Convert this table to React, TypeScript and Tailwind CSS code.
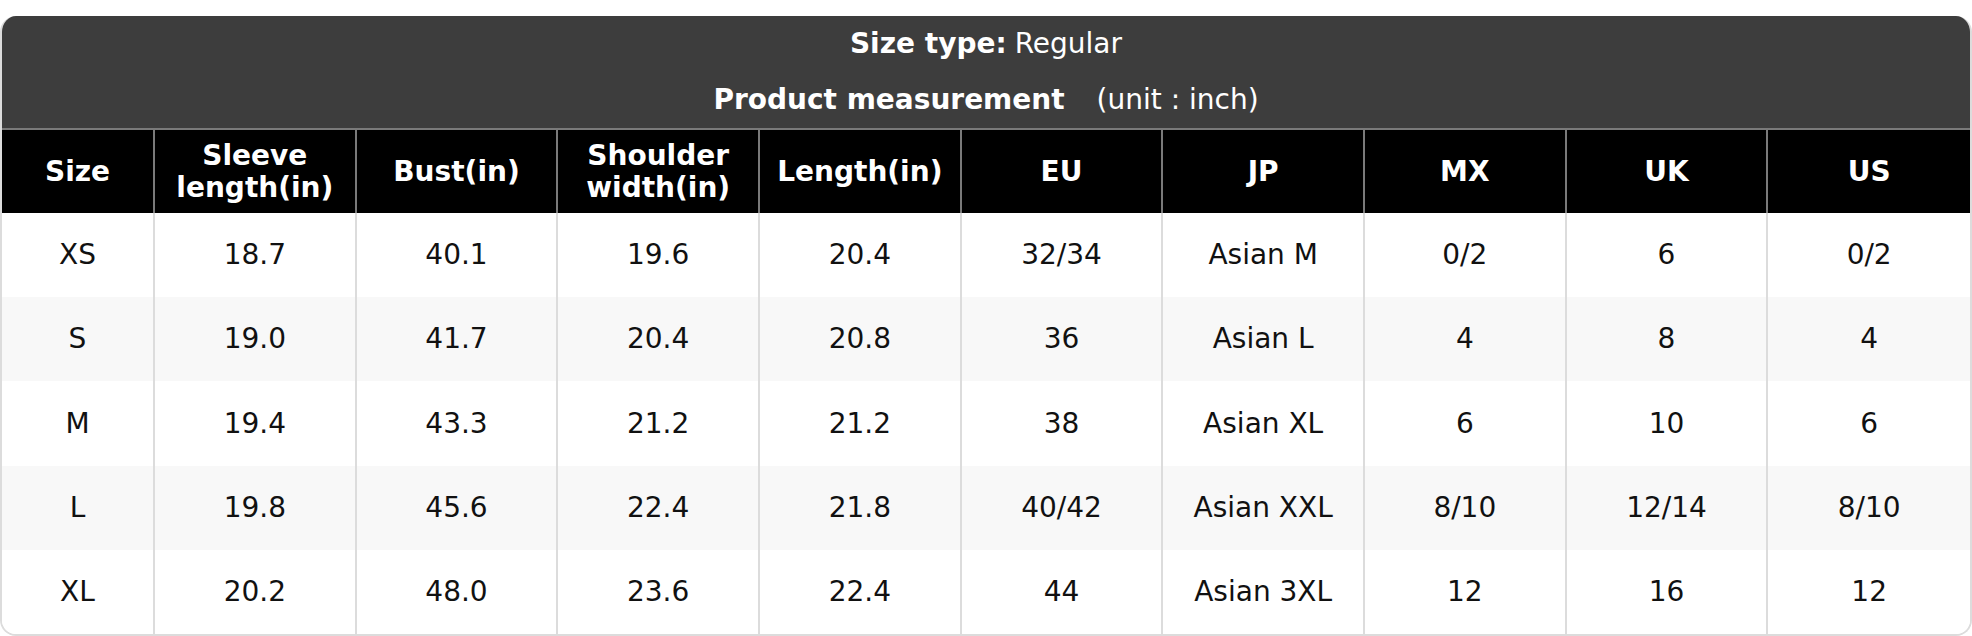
const headers = ["Size", "Sleeve length(in)", "Bust(in)", "Shoulder width(in)", "Length(in)", "EU", "JP", "MX", "UK", "US"];

const rows = [
  ["XS", "18.7", "40.1", "19.6", "20.4", "32/34", "Asian M", "0/2", "6", "0/2"],
  ["S", "19.0", "41.7", "20.4", "20.8", "36", "Asian L", "4", "8", "4"],
  ["M", "19.4", "43.3", "21.2", "21.2", "38", "Asian XL", "6", "10", "6"],
  ["L", "19.8", "45.6", "22.4", "21.8", "40/42", "Asian XXL", "8/10", "12/14", "8/10"],
  ["XL", "20.2", "48.0", "23.6", "22.4", "44", "Asian 3XL", "12", "16", "12"],
];

const App = () => {
  return (
    <div
      className="bg-white w-[1972px] h-[636px] pt-4"
      style={{ fontFamily: '"DejaVu Sans", sans-serif' }}
    >
      <div className="rounded-2xl overflow-hidden border-x-2 border-b-2 border-[#dcdcdc] h-[620px] flex flex-col">
        <div className="bg-[#3d3d3d] text-white text-[28px] h-[112px] shrink-0 flex flex-col">
          <div className="h-[56px] flex items-center justify-center">
            <span className="font-bold">Size type:</span>
            <span className="ml-2">Regular</span>
          </div>
          <div className="h-[56px] flex items-center justify-center">
            <span className="font-bold">Product measurement</span>
            <span className="ml-8">(unit : inch)</span>
          </div>
        </div>
        <div className="grid grid-cols-[153px_repeat(9,1fr)] border-t-2 border-[#7a7a7a] bg-black h-[85px] shrink-0">
          {headers.map((h, i) => (
            <div
              key={h}
              className={`flex items-center justify-center text-center text-white font-bold text-[28px] leading-[32px] px-2 ${
                i < headers.length - 1 ? "border-r-2 border-[#7a7a7a]" : ""
              }`}
            >
              {h}
            </div>
          ))}
        </div>
        {rows.map((r, ri) => (
          <div
            key={r[0]}
            className={`grid grid-cols-[153px_repeat(9,1fr)] flex-1 ${ri % 2 === 1 ? "bg-[#f8f8f8]" : "bg-white"}`}
          >
            {r.map((c, i) => (
              <div
                key={i}
                className={`flex items-center justify-center text-[28px] text-[#111] ${
                  i < r.length - 1 ? "border-r-2 border-[#dcdcdc]" : ""
                }`}
              >
                {c}
              </div>
            ))}
          </div>
        ))}
      </div>
    </div>
  );
};

export default App;
